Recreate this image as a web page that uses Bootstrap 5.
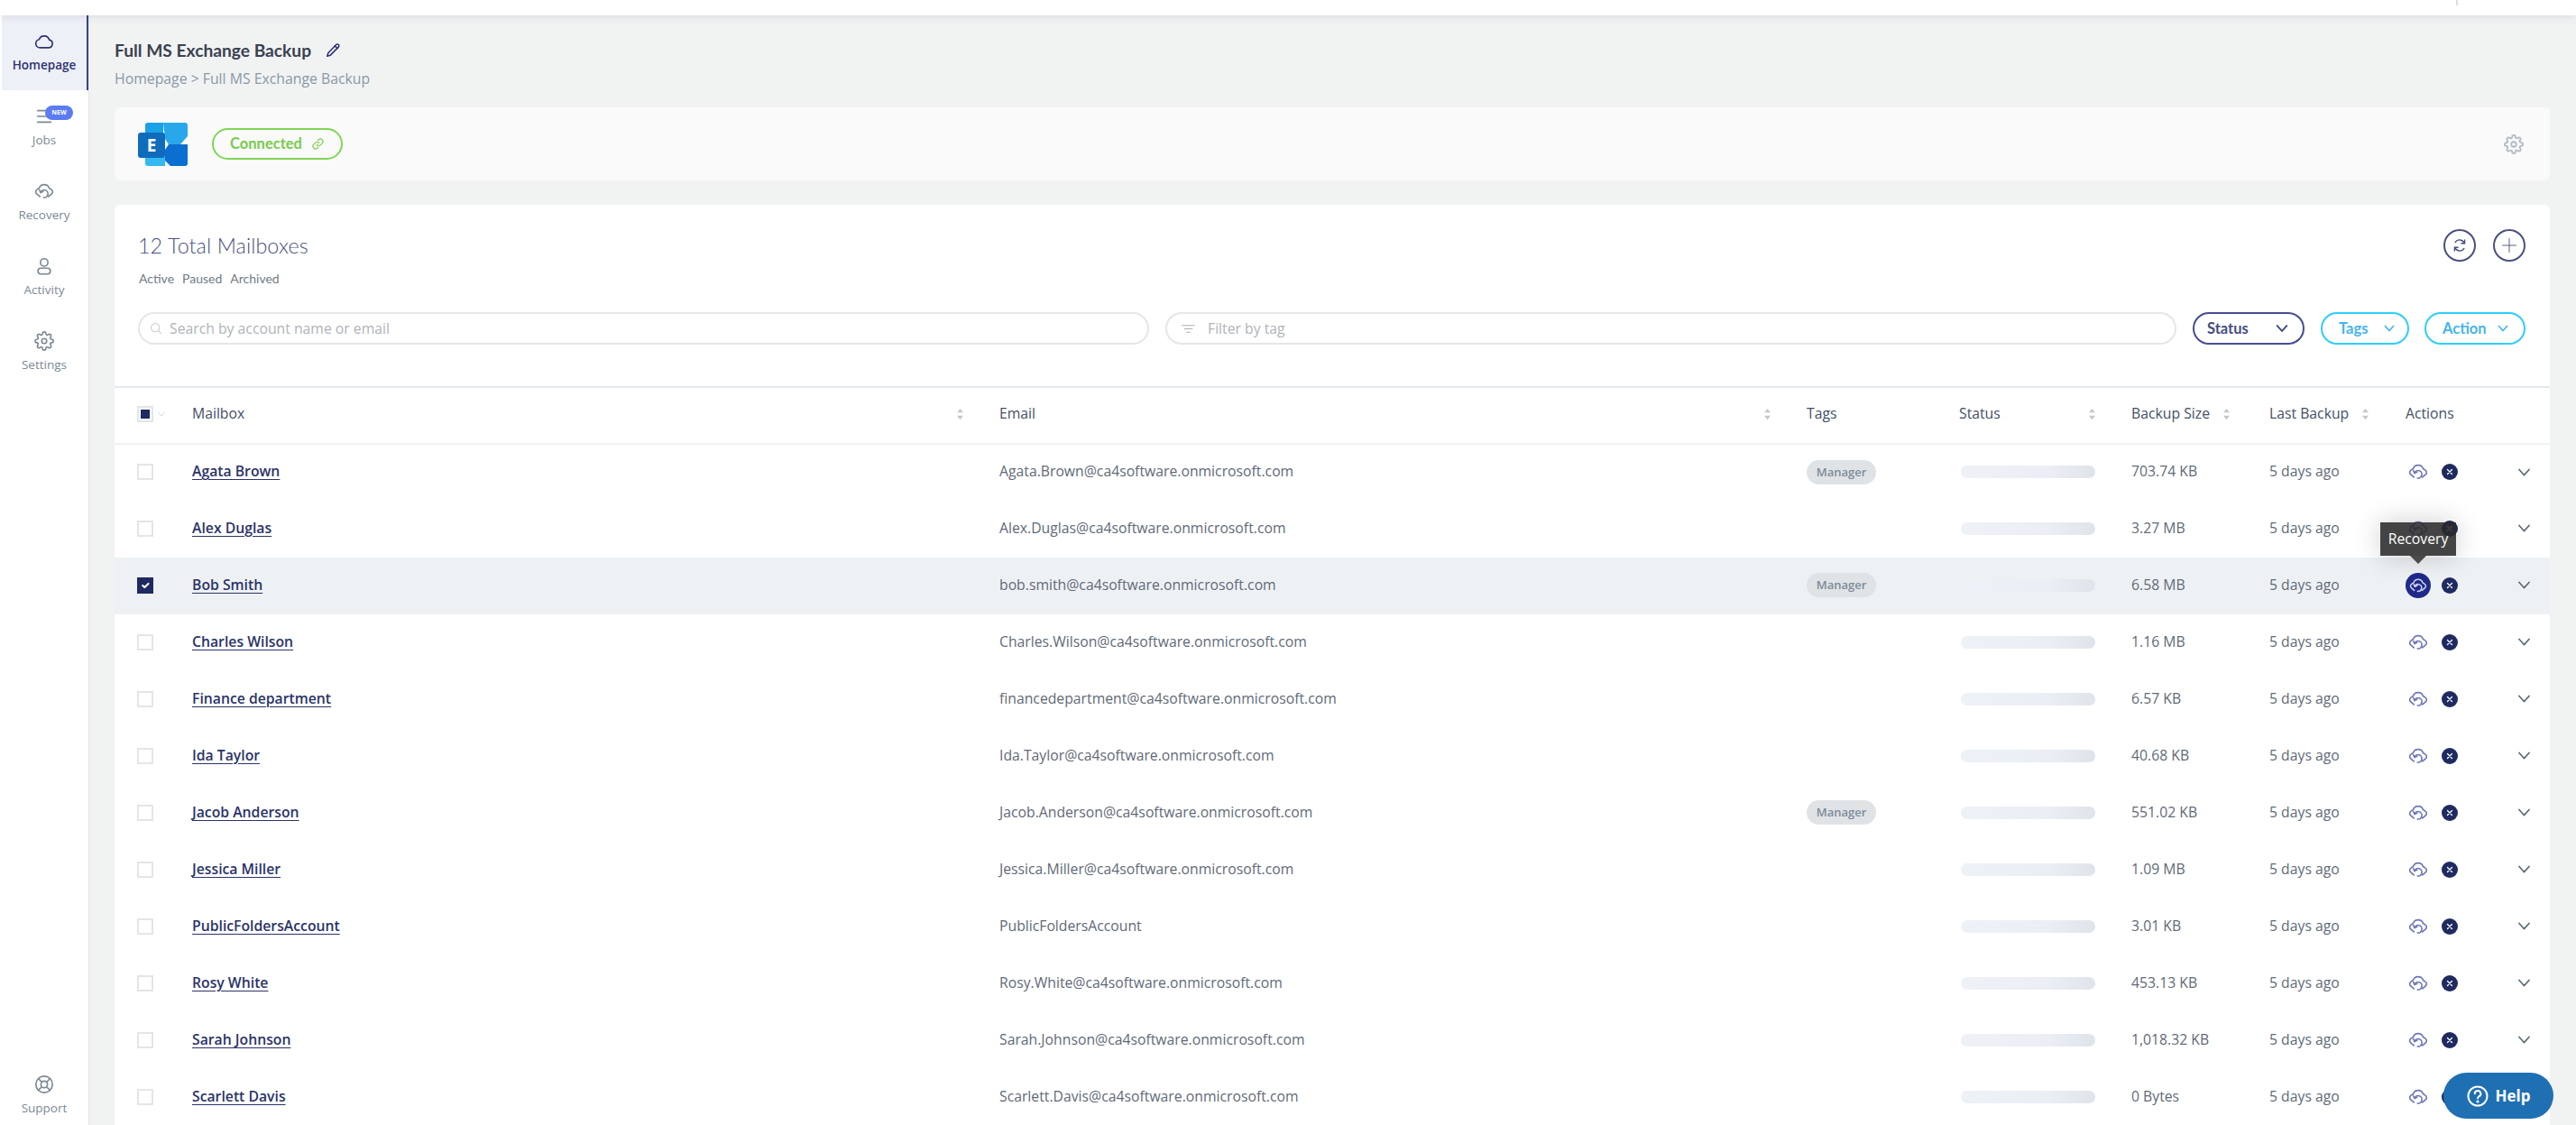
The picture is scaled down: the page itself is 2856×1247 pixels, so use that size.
<!DOCTYPE html>
<html lang="en">
<head>
<meta charset="utf-8">
<title>Full MS Exchange Backup</title>
<link href="https://cdn.jsdelivr.net/npm/bootstrap@5.3.0/dist/css/bootstrap.min.css" rel="stylesheet">
<style>
html,body{height:1247px;overflow:hidden}
body{font-family:"Open Sans","Noto Sans",sans-serif;background:#f1f3f3;color:#5b6675;font-size:15px}
.ico{fill:none;stroke:currentColor;stroke-width:1.8;stroke-linecap:round;stroke-linejoin:round;display:block}
.qs{font-family:Lato,"Noto Sans",sans-serif}
.topstrip{height:17px;background:#fff;box-shadow:0 2px 10px rgba(60,70,90,.12);position:relative;z-index:3}
.topstrip i{display:block;position:absolute;left:2723px;top:0;width:2px;height:6px;background:#d9dde8}
.shell{height:1230px;overflow:hidden}
.side{width:99px;background:#fff;border-right:1px solid #e3e6e8;flex:none}
.side-item{height:83px;padding-top:18px;color:#7c8994;font-size:13.5px;line-height:18px;text-decoration:none;position:relative;display:block;text-align:center}
.side-item svg{margin:0 auto 6px}
.side-item.on{background:#eef0f8;border-right:2px solid #3a4285;margin-left:2px;color:#2c3470;font-weight:600}
.side-item.last{height:74px}
.newtag{position:absolute;left:50px;top:17px;width:31px;height:16px;line-height:16px;border-radius:8px;background:#5b7cf0;color:#fff;font-size:7px;font-weight:700}
.mainarea{padding:25px 29px 0 28px;min-width:0;height:1230px;overflow:hidden}
.ptitle{font-size:19.2px;font-weight:700;color:#3a4150;line-height:27px;height:27px}
.ptitle svg{color:#2c3470;margin-left:16px;stroke-width:2.2}
.crumb{font-size:15.8px;color:#8b98a6;line-height:22px;margin-top:7px}
.connbar{height:81px;margin-top:21px;margin-bottom:27px;background:#fafafa;border-radius:6px;padding:0 29px 0 26px}
.connpill{height:35px;width:145px;margin-left:27px;border:2px solid #7fd653;border-radius:18px;color:#77cc4a;font-weight:700;font-size:16.5px;line-height:1;gap:10px;padding:0}
.connpill:hover{border-color:#7fd653;color:#77cc4a}
.sheet{background:#fff;border-radius:6px 6px 0 0;padding-top:27px;height:1021px;overflow:hidden}
.sheet-head{padding:0 27px 0 26px}
.bigttl{font-size:23.3px;line-height:36px;color:#4a5080;font-weight:300;letter-spacing:.1px}
.subttl{font-size:14px;line-height:18px;margin-top:10px;color:#707c88;gap:9px;padding-left:1px}
.circbtn{width:36px;height:36px;border:2px solid #4a5080;border-radius:50%;color:#4a5080;padding:0}
.circbtn:hover{color:#4a5080;border-color:#4a5080}
.filters{margin:28px 27px 46px 26px;gap:18px}
.fieldwrap{position:relative;flex:1 1 0}
.fieldwrap svg{position:absolute;left:13px;top:11px;color:#c8cdd1}
.fieldwrap.fl svg{left:17px;color:#a9b0b8}
.fieldwrap .form-control{height:36px;border:2px solid #e4e6e8;padding:0 0 0 33px;font-size:15.75px;color:#a9b0b8;box-shadow:none}
.fieldwrap.fl .form-control{padding-left:45px}
.fieldwrap .form-control::placeholder{color:#aeb4ba}
.pillbtn{height:36px;padding:0 14px 0 18px;border:2px solid #2fcdfb;border-radius:18px;color:#45b4ef;font-size:16.5px;font-weight:700;background:#fff;justify-content:space-between}
.pillbtn svg{stroke-width:3.4}
.pillbtn:hover{border-color:#2fcdfb;color:#45b4ef;background:#fff}
.pillbtn.st{width:124px;border-color:#464c92;color:#464c80;padding:0 16px 0 14px}
.pillbtn.st:hover{border-color:#464c92;color:#464c80}
.pillbtn.tg{width:98px}
.pillbtn.ac{width:112px;margin-left:-1px;padding-right:17px}
.mbx{table-layout:fixed;width:2700px;margin:0;border-top:2px solid #e4e8ef}
.mbx th,.mbx td{padding:0;border:0;vertical-align:middle;background:transparent;color:inherit;box-shadow:none}
.mbx thead th{height:63px;padding-bottom:4px;border-bottom:2px solid #f0f2f4;font-size:15.75px;font-weight:500;color:#454f66}
.mbx td{height:63px;padding-bottom:2px;font-size:15.75px;color:#5f6a78}
.mbx tr.sel td{background:#eef1f4}
.mbx .chkcell{padding-left:25px}
.mbx .form-check-input{width:18px;height:18px;margin:0;border:2px solid #e3e5e7;border-radius:0;float:none;display:block;box-shadow:none}
.mbx .form-check-input:checked{background-color:#1f2a60;border-color:#1f2a60}
.mbx .form-check-input:indeterminate{background-color:#fff;background-image:none;border-color:#e3e5e7;box-shadow:inset 0 0 0 2px #fff,inset 0 0 0 8px #1f2a60}
.hdchev{color:#c3c8cc;margin-left:4px}
.sorter{color:#c4c8cc;flex:none}
.colwrap{padding-right:39px}
.colwrap.tight{padding-right:0;justify-content:flex-start!important;gap:14px}
a.who{color:#2a3368;font-weight:600;text-decoration:underline;text-underline-offset:3px}
.mgr{display:inline-block;background:#dfe3e6;color:#7d8b99;font-size:13px;font-weight:600;height:27px;line-height:27px;width:77px;text-align:center;border-radius:14px;padding:0}
.skel{height:14px;width:149px;margin-left:2px;border-radius:7px;background:linear-gradient(90deg,#eef1f6 0%,#ebeef5 65%,#dfe3ea 100%)}
.rowacts{position:relative;padding-left:2px;width:160px}
.rec{color:#6f77b4;width:24px;display:flex;justify-content:center}
.xdot{width:18px;height:18px;border-radius:50%;background:#1f2a60;color:#fff;margin-left:14px;flex:none}
.xdot svg{stroke-width:3}
.rowchev{color:#5c6b73;margin-left:66px;stroke-width:2.4}
.sel .rec{width:28px;height:28px;border-radius:50%;background:#1f2a88;color:#cfd3f0;margin:0 -2px}
.tipbox{position:absolute;left:-28px;top:-56px;width:84px;height:37px;background:rgba(42,42,42,.88);color:#fff;font-size:15.75px;line-height:37px;text-align:center;box-shadow:0 0 30px rgba(0,0,0,.2);z-index:5}
.tipbox::after{content:"";position:absolute;left:33px;top:37px;border:9px solid transparent;border-top-color:#4b4b4b;border-bottom:0}
.helpfab{position:fixed;left:2709px;top:1189px;width:122px;height:51px;border-radius:26px;background:#1f6fb3;color:#fff;font-weight:700;font-size:17px;gap:8px;z-index:9;border:0;padding:0}
.helpfab:hover{background:#1f6fb3;color:#fff}
</style>
</head>
<body>
<svg width="0" height="0" class="position-absolute">
<defs>
<symbol id="i-cloud" viewBox="0 0 24 24"><path d="M7 19.5h10.2a4.8 4.8 0 0 0 .9-9.5A6.4 6.4 0 0 0 5.9 9.6 5 5 0 0 0 7 19.5z"/></symbol>
<symbol id="i-rec" viewBox="0 0 24 24"><path d="M6.8 18.5 3 15.2a3.2 3.2 0 0 1 .3-5.2L6 8.2a6.4 6.4 0 0 1 12 0l2.7 1.8a3.2 3.2 0 0 1 .3 5.2l-3.8 3.3"/><path d="M7.6 13.5A4.6 4.6 0 1 1 11.2 19.6"/><path d="M6.2 10.4l1.4 3.1 3.1-1.3"/></symbol>
<symbol id="i-user" viewBox="0 0 24 24"><circle cx="12" cy="7.5" r="4.5"/><rect x="4.5" y="14.5" width="15" height="7" rx="3.5"/></symbol>
<symbol id="i-gear" viewBox="0 0 24 24"><circle cx="12" cy="12" r="3"/><path d="M19.4 15a1.65 1.65 0 0 0 .33 1.82l.06.06a2 2 0 0 1 0 2.83 2 2 0 0 1-2.83 0l-.06-.06a1.65 1.65 0 0 0-1.82-.33 1.65 1.65 0 0 0-1 1.51V21a2 2 0 0 1-2 2 2 2 0 0 1-2-2v-.09A1.65 1.65 0 0 0 9 19.4a1.65 1.65 0 0 0-1.82.33l-.06.06a2 2 0 0 1-2.83 0 2 2 0 0 1 0-2.83l.06-.06a1.65 1.65 0 0 0 .33-1.82 1.65 1.65 0 0 0-1.51-1H3a2 2 0 0 1-2-2 2 2 0 0 1 2-2h.09A1.65 1.65 0 0 0 4.6 9a1.65 1.65 0 0 0-.33-1.82l-.06-.06a2 2 0 0 1 0-2.83 2 2 0 0 1 2.83 0l.06.06a1.65 1.65 0 0 0 1.82.33H9a1.65 1.65 0 0 0 1-1.51V3a2 2 0 0 1 2-2 2 2 0 0 1 2 2v.09a1.65 1.65 0 0 0 1 1.51 1.65 1.65 0 0 0 1.82-.33l.06-.06a2 2 0 0 1 2.83 0 2 2 0 0 1 0 2.83l-.06.06a1.65 1.65 0 0 0-.33 1.82V9a1.65 1.65 0 0 0 1.51 1H21a2 2 0 0 1 2 2 2 2 0 0 1-2 2h-.09a1.65 1.65 0 0 0-1.51 1z"/></symbol>
<symbol id="i-buoy" viewBox="0 0 24 24"><circle cx="12" cy="12" r="10"/><circle cx="12" cy="12" r="4"/><path d="M5 5l4 4M19 5l-4 4M5 19l4-4M19 19l-4-4"/></symbol>
<symbol id="i-jobs" viewBox="0 0 24 24"><path d="M4 5h16M4 12h16M4 19h16"/></symbol>
<symbol id="i-pen" viewBox="0 0 24 24"><path d="M16.5 3.5a2.6 2.6 0 0 1 3.7 3.7L7.5 20 2.5 21.5 4 16.5z"/><path d="M14.5 5.5l4 4"/></symbol>
<symbol id="i-link" viewBox="0 0 24 24"><path d="M10 13.5a4.5 4.5 0 0 0 6.6.4l3-3a4.6 4.6 0 0 0-6.5-6.5l-1.7 1.7"/><path d="M14 10.5a4.5 4.5 0 0 0-6.6-.4l-3 3a4.6 4.6 0 0 0 6.5 6.5l1.7-1.7"/></symbol>
<symbol id="i-sync" viewBox="0 0 24 24"><path d="M19 9a7.5 7.5 0 0 0-13.5-1.5"/><path d="M5 15a7.5 7.5 0 0 0 13.5 1.5"/><path d="M19.5 4v5h-5M4.5 20v-5h5"/></symbol>
<symbol id="i-plus" viewBox="0 0 24 24"><path d="M12 2v20M2 12h20"/></symbol>
<symbol id="i-chev" viewBox="0 0 24 24"><path d="M3 7l9 10 9-10"/></symbol>
<symbol id="i-x" viewBox="0 0 24 24"><path d="M6 6l12 12M18 6L6 18"/></symbol>
<symbol id="i-search" viewBox="0 0 24 24"><circle cx="10.5" cy="10.5" r="8"/><path d="M16.5 16.5l5 5"/></symbol>
<symbol id="i-filter" viewBox="0 0 24 24"><path d="M1 6h22M5 12h14M9 18h6"/></symbol>
<symbol id="i-sort" viewBox="0 0 10 16"><path fill="currentColor" stroke="none" d="M5 1l4 5H1zM5 15L1 10h8z"/></symbol>
</defs>
</svg>

<div class="topstrip"><i></i></div>
<div class="shell d-flex">
  <nav class="side d-flex flex-column">
    <a class="side-item on" href="#"><svg class="ico" width="24" height="22"><use href="#i-cloud"/></svg>Homepage</a>
    <a class="side-item" href="#"><svg class="ico" width="24" height="22"><use href="#i-jobs"/></svg><span class="newtag">NEW</span>Jobs</a>
    <a class="side-item" href="#"><svg class="ico" width="24" height="22"><use href="#i-rec"/></svg>Recovery</a>
    <a class="side-item" href="#"><svg class="ico" width="24" height="22"><use href="#i-user"/></svg>Activity</a>
    <a class="side-item" href="#"><svg class="ico" width="24" height="22"><use href="#i-gear"/></svg>Settings</a>
    <a class="side-item last mt-auto" href="#"><svg class="ico" width="24" height="22"><use href="#i-buoy"/></svg>Support</a>
  </nav>
  <main class="mainarea flex-grow-1">
    <div class="ptitle qs d-flex align-items-center">Full MS Exchange Backup<svg class="ico" width="17" height="17"><use href="#i-pen"/></svg></div>
    <div class="crumb">Homepage &gt; Full MS Exchange Backup</div>

    <div class="connbar d-flex align-items-center justify-content-between">
      <div class="d-flex align-items-center">
        <svg width="55" height="48" viewBox="0 0 55 48">
          <path d="M8 3a3 3 0 0 1 3-3h17v14H8z" fill="#1ba1e8"/>
          <path d="M28 0h24a3 3 0 0 1 3 3v12l-8 9H34L30 18z" fill="#28a8ea"/>
          <path d="M34 24h21v21a3 3 0 0 1-3 3H36l-6-6V30z" fill="#0a6fd0"/>
          <path d="M8 38h22v10H11a3 3 0 0 1-3-3z" fill="#35b8f1"/>
          <rect x="0" y="11" width="30" height="28" rx="3" fill="#0f6cbd"/>
          <text x="15" y="32" text-anchor="middle" font-family="'Open Sans',sans-serif" font-weight="700" font-size="19" fill="#fff">E</text>
        </svg>
        <button class="btn connpill qs d-flex align-items-center justify-content-center" type="button">Connected<svg class="ico" width="15" height="15"><use href="#i-link"/></svg></button>
      </div>
      <svg class="ico" width="22" height="22" style="color:#b0bac6;stroke-width:2"><use href="#i-gear"/></svg>
    </div>

    <section class="sheet">
      <div class="sheet-head d-flex justify-content-between align-items-start">
        <div>
          <div class="bigttl qs">12 Total Mailboxes</div>
          <div class="subttl qs d-flex"><span>Active</span><span>Paused</span><span>Archived</span></div>
        </div>
        <div class="d-flex gap-3 mt-0">
          <button class="btn circbtn d-flex align-items-center justify-content-center" type="button"><svg class="ico" width="18" height="18"><use href="#i-sync"/></svg></button>
          <button class="btn circbtn d-flex align-items-center justify-content-center" type="button" style="margin-left:3px"><svg class="ico" width="18" height="18" style="stroke-width:1.2"><use href="#i-plus"/></svg></button>
        </div>
      </div>
      <div class="filters d-flex align-items-center">
        <div class="fieldwrap"><svg class="ico" width="14" height="14"><use href="#i-search"/></svg><input class="form-control rounded-pill" placeholder="Search by account name or email"></div>
        <div class="fieldwrap fl"><svg class="ico" width="17" height="15"><use href="#i-filter"/></svg><input class="form-control rounded-pill" placeholder="Filter by tag"></div>
        <button class="btn pillbtn st qs d-flex align-items-center" type="button">Status<svg class="ico" width="14" height="14"><use href="#i-chev"/></svg></button>
        <button class="btn pillbtn tg qs d-flex align-items-center" type="button">Tags<svg class="ico" width="12" height="12"><use href="#i-chev"/></svg></button>
        <button class="btn pillbtn ac qs d-flex align-items-center" type="button">Action<svg class="ico" width="12" height="12"><use href="#i-chev"/></svg></button>
      </div>

      <table class="table mbx">
        <colgroup><col style="width:86px"><col style="width:895px"><col style="width:895px"><col style="width:169px"><col style="width:191px"><col style="width:153px"><col style="width:151px"><col style="width:160px"></colgroup>
        <thead>
          <tr>
            <th class="chkcell"><div class="d-flex align-items-center"><input class="form-check-input hdchk" type="checkbox" id="allchk"><svg class="ico hdchev" width="10" height="10"><use href="#i-chev"/></svg></div></th>
            <th><div class="colwrap d-flex justify-content-between align-items-center">Mailbox<svg class="sorter" width="9" height="14"><use href="#i-sort"/></svg></div></th>
            <th><div class="colwrap d-flex justify-content-between align-items-center">Email<svg class="sorter" width="9" height="14"><use href="#i-sort"/></svg></div></th>
            <th>Tags</th>
            <th><div class="colwrap d-flex justify-content-between align-items-center">Status<svg class="sorter" width="9" height="14"><use href="#i-sort"/></svg></div></th>
            <th><div class="colwrap tight d-flex align-items-center">Backup Size<svg class="sorter" width="9" height="14"><use href="#i-sort"/></svg></div></th>
            <th><div class="colwrap tight d-flex align-items-center">Last Backup<svg class="sorter" width="9" height="14"><use href="#i-sort"/></svg></div></th>
            <th>Actions</th>
          </tr>
        </thead>
        <tbody>
          <tr><td class="chkcell"><input class="form-check-input" type="checkbox"></td><td><a class="who" href="#">Agata Brown</a></td><td>Agata.Brown@ca4software.onmicrosoft.com</td><td><span class="mgr">Manager</span></td><td><div class="skel"></div></td><td>703.74 KB</td><td>5 days ago</td><td><div class="rowacts d-flex align-items-center"><span class="rec"><svg class="ico" width="24" height="22"><use href="#i-rec"/></svg></span><span class="xdot d-flex align-items-center justify-content-center"><svg class="ico" width="10" height="10"><use href="#i-x"/></svg></span><svg class="ico rowchev" width="15" height="15"><use href="#i-chev"/></svg></div></td></tr>
          <tr><td class="chkcell"><input class="form-check-input" type="checkbox"></td><td><a class="who" href="#">Alex Duglas</a></td><td>Alex.Duglas@ca4software.onmicrosoft.com</td><td></td><td><div class="skel"></div></td><td>3.27 MB</td><td>5 days ago</td><td><div class="rowacts d-flex align-items-center"><span class="rec"><svg class="ico" width="24" height="22"><use href="#i-rec"/></svg></span><span class="xdot d-flex align-items-center justify-content-center"><svg class="ico" width="10" height="10"><use href="#i-x"/></svg></span><svg class="ico rowchev" width="15" height="15"><use href="#i-chev"/></svg></div></td></tr>
          <tr class="sel"><td class="chkcell"><input class="form-check-input" type="checkbox" checked></td><td><a class="who" href="#">Bob Smith</a></td><td>bob.smith@ca4software.onmicrosoft.com</td><td><span class="mgr">Manager</span></td><td><div class="skel"></div></td><td>6.58 MB</td><td>5 days ago</td><td><div class="rowacts d-flex align-items-center"><span class="tipbox">Recovery</span><span class="rec d-flex align-items-center justify-content-center"><svg class="ico" width="22" height="20"><use href="#i-rec"/></svg></span><span class="xdot d-flex align-items-center justify-content-center"><svg class="ico" width="10" height="10"><use href="#i-x"/></svg></span><svg class="ico rowchev" width="15" height="15"><use href="#i-chev"/></svg></div></td></tr>
          <tr><td class="chkcell"><input class="form-check-input" type="checkbox"></td><td><a class="who" href="#">Charles Wilson</a></td><td>Charles.Wilson@ca4software.onmicrosoft.com</td><td></td><td><div class="skel"></div></td><td>1.16 MB</td><td>5 days ago</td><td><div class="rowacts d-flex align-items-center"><span class="rec"><svg class="ico" width="24" height="22"><use href="#i-rec"/></svg></span><span class="xdot d-flex align-items-center justify-content-center"><svg class="ico" width="10" height="10"><use href="#i-x"/></svg></span><svg class="ico rowchev" width="15" height="15"><use href="#i-chev"/></svg></div></td></tr>
          <tr><td class="chkcell"><input class="form-check-input" type="checkbox"></td><td><a class="who" href="#">Finance department</a></td><td>financedepartment@ca4software.onmicrosoft.com</td><td></td><td><div class="skel"></div></td><td>6.57 KB</td><td>5 days ago</td><td><div class="rowacts d-flex align-items-center"><span class="rec"><svg class="ico" width="24" height="22"><use href="#i-rec"/></svg></span><span class="xdot d-flex align-items-center justify-content-center"><svg class="ico" width="10" height="10"><use href="#i-x"/></svg></span><svg class="ico rowchev" width="15" height="15"><use href="#i-chev"/></svg></div></td></tr>
          <tr><td class="chkcell"><input class="form-check-input" type="checkbox"></td><td><a class="who" href="#">Ida Taylor</a></td><td>Ida.Taylor@ca4software.onmicrosoft.com</td><td></td><td><div class="skel"></div></td><td>40.68 KB</td><td>5 days ago</td><td><div class="rowacts d-flex align-items-center"><span class="rec"><svg class="ico" width="24" height="22"><use href="#i-rec"/></svg></span><span class="xdot d-flex align-items-center justify-content-center"><svg class="ico" width="10" height="10"><use href="#i-x"/></svg></span><svg class="ico rowchev" width="15" height="15"><use href="#i-chev"/></svg></div></td></tr>
          <tr><td class="chkcell"><input class="form-check-input" type="checkbox"></td><td><a class="who" href="#">Jacob Anderson</a></td><td>Jacob.Anderson@ca4software.onmicrosoft.com</td><td><span class="mgr">Manager</span></td><td><div class="skel"></div></td><td>551.02 KB</td><td>5 days ago</td><td><div class="rowacts d-flex align-items-center"><span class="rec"><svg class="ico" width="24" height="22"><use href="#i-rec"/></svg></span><span class="xdot d-flex align-items-center justify-content-center"><svg class="ico" width="10" height="10"><use href="#i-x"/></svg></span><svg class="ico rowchev" width="15" height="15"><use href="#i-chev"/></svg></div></td></tr>
          <tr><td class="chkcell"><input class="form-check-input" type="checkbox"></td><td><a class="who" href="#">Jessica Miller</a></td><td>Jessica.Miller@ca4software.onmicrosoft.com</td><td></td><td><div class="skel"></div></td><td>1.09 MB</td><td>5 days ago</td><td><div class="rowacts d-flex align-items-center"><span class="rec"><svg class="ico" width="24" height="22"><use href="#i-rec"/></svg></span><span class="xdot d-flex align-items-center justify-content-center"><svg class="ico" width="10" height="10"><use href="#i-x"/></svg></span><svg class="ico rowchev" width="15" height="15"><use href="#i-chev"/></svg></div></td></tr>
          <tr><td class="chkcell"><input class="form-check-input" type="checkbox"></td><td><a class="who" href="#">PublicFoldersAccount</a></td><td>PublicFoldersAccount</td><td></td><td><div class="skel"></div></td><td>3.01 KB</td><td>5 days ago</td><td><div class="rowacts d-flex align-items-center"><span class="rec"><svg class="ico" width="24" height="22"><use href="#i-rec"/></svg></span><span class="xdot d-flex align-items-center justify-content-center"><svg class="ico" width="10" height="10"><use href="#i-x"/></svg></span><svg class="ico rowchev" width="15" height="15"><use href="#i-chev"/></svg></div></td></tr>
          <tr><td class="chkcell"><input class="form-check-input" type="checkbox"></td><td><a class="who" href="#">Rosy White</a></td><td>Rosy.White@ca4software.onmicrosoft.com</td><td></td><td><div class="skel"></div></td><td>453.13 KB</td><td>5 days ago</td><td><div class="rowacts d-flex align-items-center"><span class="rec"><svg class="ico" width="24" height="22"><use href="#i-rec"/></svg></span><span class="xdot d-flex align-items-center justify-content-center"><svg class="ico" width="10" height="10"><use href="#i-x"/></svg></span><svg class="ico rowchev" width="15" height="15"><use href="#i-chev"/></svg></div></td></tr>
          <tr><td class="chkcell"><input class="form-check-input" type="checkbox"></td><td><a class="who" href="#">Sarah Johnson</a></td><td>Sarah.Johnson@ca4software.onmicrosoft.com</td><td></td><td><div class="skel"></div></td><td>1,018.32 KB</td><td>5 days ago</td><td><div class="rowacts d-flex align-items-center"><span class="rec"><svg class="ico" width="24" height="22"><use href="#i-rec"/></svg></span><span class="xdot d-flex align-items-center justify-content-center"><svg class="ico" width="10" height="10"><use href="#i-x"/></svg></span><svg class="ico rowchev" width="15" height="15"><use href="#i-chev"/></svg></div></td></tr>
          <tr><td class="chkcell"><input class="form-check-input" type="checkbox"></td><td><a class="who" href="#">Scarlett Davis</a></td><td>Scarlett.Davis@ca4software.onmicrosoft.com</td><td></td><td><div class="skel"></div></td><td>0 Bytes</td><td>5 days ago</td><td><div class="rowacts d-flex align-items-center"><span class="rec"><svg class="ico" width="24" height="22"><use href="#i-rec"/></svg></span><span class="xdot d-flex align-items-center justify-content-center"><svg class="ico" width="10" height="10"><use href="#i-x"/></svg></span><svg class="ico rowchev" width="15" height="15"><use href="#i-chev"/></svg></div></td></tr>
        </tbody>
      </table>
    </section>
  </main>
</div>

<button class="btn helpfab d-flex align-items-center justify-content-center" type="button">
  <svg width="24" height="24" viewBox="0 0 24 24" fill="none" stroke="#fff" stroke-width="2"><circle cx="12" cy="12" r="10.5"/><path d="M8.8 9.3a3.3 3.3 0 1 1 4.9 2.9c-1.1.6-1.7 1.2-1.7 2.4" stroke-linecap="round"/><circle cx="12" cy="18" r=".6" fill="#fff"/></svg>
  Help
</button>
<script src="https://cdn.jsdelivr.net/npm/bootstrap@5.3.0/dist/js/bootstrap.bundle.min.js"></script>
<script>document.getElementById('allchk').indeterminate=true;</script>
</body>
</html>
